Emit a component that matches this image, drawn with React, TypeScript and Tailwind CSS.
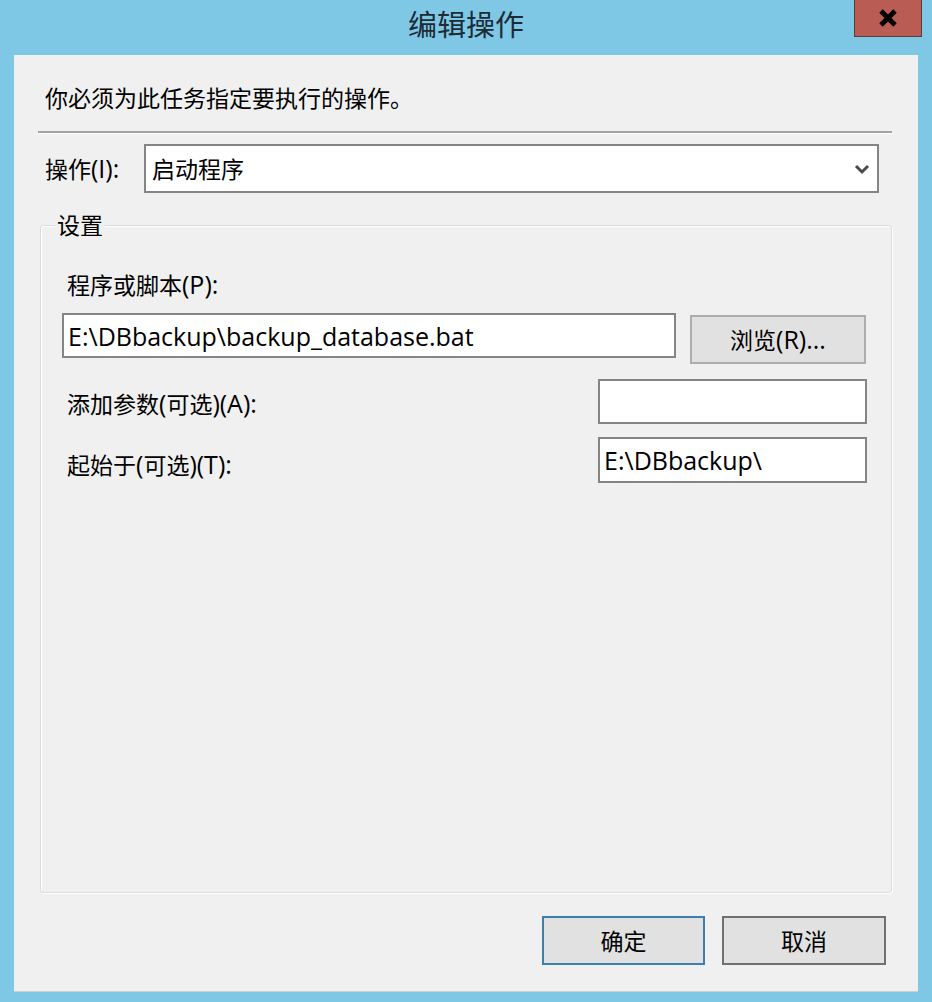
import React from "react";

const FONT = { fontFamily: '"Open Sans", "Noto Sans CJK SC", sans-serif' };

function L({ children }: { children: React.ReactNode }) {
  return <span className="text-[25px]">{children}</span>;
}

function Chevron() {
  return (
    <svg width="18" height="12" viewBox="0 0 18 12" className="block">
      <polyline points="3,3 9,9 15,3" fill="none" stroke="#4a4a4a" strokeWidth="3" />
    </svg>
  );
}

function CloseX() {
  return (
    <svg width="20" height="18" viewBox="0 0 20 18" className="block">
      <line x1="3" y1="2" x2="17" y2="16" stroke="#000" strokeWidth="5" />
      <line x1="17" y1="2" x2="3" y2="16" stroke="#000" strokeWidth="5" />
    </svg>
  );
}

export default function App() {
  return (
    <div
      className="w-[932px] h-[1002px] bg-[#7ec8e5] flex flex-col text-black text-[23px]"
      style={FONT}
    >
      {/* Title bar */}
      <div className="relative h-[55px] flex justify-center">
        <div className="pt-[9px] leading-[32px] text-[29px] text-[#1c2b36]">编辑操作</div>
        <div className="absolute right-[10px] top-0 w-[68px] h-[37px] bg-[#b95c54] border border-[#5b3b3b] border-t-0 flex items-center justify-center">
          <CloseX />
        </div>
      </div>

      {/* Client area */}
      <div className="mx-[14px] h-[937px] bg-[#f0f0f0] flex flex-col border-b border-[#c9cfd3]">
        <div className="ml-[31px] mt-[28px] leading-[30px]">你必须为此任务指定要执行的操作。</div>

        <div className="ml-[24px] w-[854px] mt-[18px] border-t-2 border-[#a2a2a2] border-b border-b-white" />

        <div className="flex items-center mt-[10px] h-[49px]">
          <div className="ml-[31px] w-[99px] leading-[30px]">
            操作<L>(I):</L>
          </div>
          <div className="w-[735px] h-[49px] bg-white border-2 border-[#858585] flex items-center justify-between pl-[6px] pr-[6px]">
            <span className="leading-[30px]">启动程序</span>
            <Chevron />
          </div>
        </div>

        {/* Group box */}
        <div className="relative ml-[26px] w-[852px] h-[668px] mt-[32px] border border-[#d6dde2] rounded-[3px] shadow-[inset_1px_1px_0_#ffffff,1px_1px_0_#ffffff] flex flex-col">
          <div className="absolute left-[14px] top-[-16px] px-[2px] bg-[#f0f0f0] leading-[30px]">设置</div>

          <div className="ml-[26px] mt-[43px] leading-[30px]">
            程序或脚本<L>(P):</L>
          </div>

          <div className="flex items-start mt-[13px]">
            <div className="ml-[21px] w-[614px] h-[45px] bg-white border-2 border-[#858585] flex items-center pl-[4px]">
              <span className="leading-[30px] text-[25px]">E:\DBbackup\backup_database.bat</span>
            </div>
            <div className="ml-[14px] mt-[2px] w-[176px] h-[49px] bg-[#e1e1e1] border-2 border-[#adadad] flex items-center justify-center">
              <span className="leading-[30px]">
                浏览<L>(R)...</L>
              </span>
            </div>
          </div>

          <div className="flex items-center mt-[15px]">
            <div className="ml-[26px] flex-1 leading-[30px] pt-[4px]">
              添加参数<L>(</L>可选<L>)(A):</L>
            </div>
            <div className="mr-[24px] w-[269px] h-[45px] bg-white border-2 border-[#858585]" />
          </div>

          <div className="flex items-center mt-[13px]">
            <div className="ml-[26px] flex-1 leading-[30px] pt-[8px]">
              起始于<L>(</L>可选<L>)(T):</L>
            </div>
            <div className="mr-[24px] w-[269px] h-[46px] bg-white border-2 border-[#858585] flex items-center pl-[4px]">
              <span className="leading-[30px] text-[25px]">E:\DBbackup\</span>
            </div>
          </div>
        </div>

        {/* Buttons */}
        <div className="flex justify-end gap-[17px] mt-[23px] pr-[32px]">
          <div className="w-[163px] h-[49px] bg-[#e1e1e1] border-2 border-[#3c7fb1] flex items-center justify-center">
            <span className="leading-[30px]">确定</span>
          </div>
          <div className="w-[164px] h-[49px] bg-[#e1e1e1] border-2 border-[#707070] flex items-center justify-center">
            <span className="leading-[30px]">取消</span>
          </div>
        </div>
      </div>
    </div>
  );
}
